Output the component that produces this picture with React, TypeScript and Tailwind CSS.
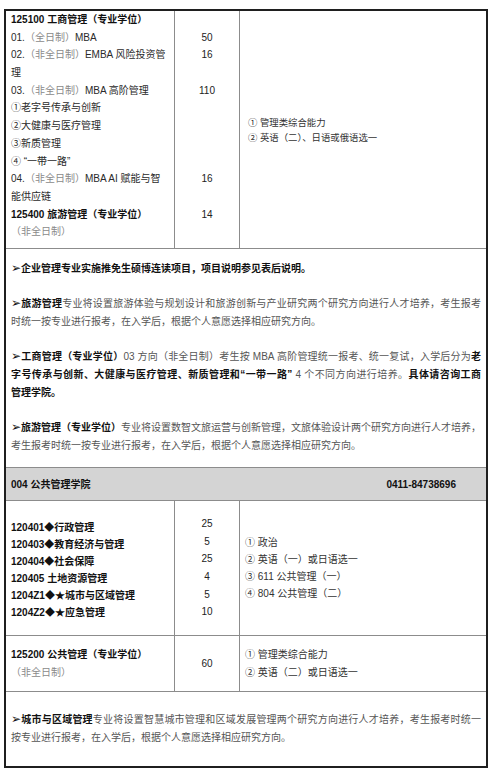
import React from "react";

const B = ({ children }: { children: React.ReactNode }) => (
  <span className="font-bold text-[#111]">{children}</span>
);
const G = ({ children }: { children: React.ReactNode }) => (
  <span className="text-[#8a8a8a]">{children}</span>
);
const Ar = () => (
  <span className="font-['DejaVu_Sans',sans-serif] font-bold text-[12px] leading-none text-[#111]">➢</span>
);

function JLine({ children, last }: { children: React.ReactNode; last?: boolean }) {
  return (
    <div
      className={
        last
          ? "whitespace-nowrap h-[18px]"
          : "text-justify [text-align-last:justify] whitespace-nowrap h-[18px]"
      }
    >
      {children}
    </div>
  );
}

export default function App() {
  const row1Left: React.ReactNode[] = [
    <B key="a">125100 工商管理（专业学位）</B>,
    <span key="b">01.<G>（全日制）</G>MBA</span>,
    <span key="c">02.<G>（非全日制）</G>EMBA 风险投资管</span>,
    <span key="d">理</span>,
    <span key="e">03.<G>（非全日制）</G>MBA 高阶管理</span>,
    <span key="f">①老字号传承与创新</span>,
    <span key="g">②大健康与医疗管理</span>,
    <span key="h">③新质管理</span>,
    <span key="i">④ “一带一路”</span>,
    <span key="j">04.<G>（非全日制）</G>MBA AI 赋能与智</span>,
    <span key="k">能供应链</span>,
    <B key="l">125400 旅游管理（专业学位）</B>,
    <G key="m">（非全日制）</G>,
  ];
  const row1Nums = ["", "50", "16", "", "110", "", "", "", "", "16", "", "14", ""];

  const row2 = [
    ["120401◆行政管理", "25"],
    ["120403◆教育经济与管理", "5"],
    ["120404◆社会保障", "25"],
    ["120405 土地资源管理", "4"],
    ["1204Z1◆★城市与区域管理", "5"],
    ["1204Z2◆★应急管理", "10"],
  ];

  return (
    <div className="w-[493px] h-[775px] bg-white pt-[9px] pl-[4px] font-['Liberation_Sans','Noto_Sans_CJK_SC',sans-serif] text-[#2a2a2a]">
      <div className="w-[484px] border-2 border-[#1f1f1f]">
        {/* Row 1 */}
        <div className="grid grid-cols-[169px_65px_1fr] h-[238px] border-b border-[#8c8c8c]">
          <div className="border-r border-[#8c8c8c] pl-[5px] text-[10px] leading-[17.7px]">
            {row1Left.map((l, i) => (
              <div key={i} className="whitespace-nowrap h-[17.7px]">
                {l}
              </div>
            ))}
          </div>
          <div className="border-r border-[#8c8c8c] text-[10px] leading-[17.7px] text-center text-[#222]">
            {row1Nums.map((n, i) => (
              <div key={i} className="h-[17.7px]">
                {n}
              </div>
            ))}
          </div>
          <div className="flex flex-col justify-center pl-[8px] text-[9.4px] leading-[15px] text-[#333]">
            <div>① 管理类综合能力</div>
            <div>② 英语（二）、日语或俄语选一</div>
          </div>
        </div>

        {/* Notes 1 */}
        <div className="pt-[11px] pb-[12px] px-[5px] text-[10px] leading-[18px] text-[#555] flex flex-col gap-[17px]">
          <div>
            <JLine last>
              <Ar />
              <B>企业管理专业实施推免生硕博连读项目，项目说明参见表后说明。</B>
            </JLine>
          </div>
          <div>
            <JLine>
              <Ar />
              <B>旅游管理</B>专业将设置旅游体验与规划设计和旅游创新与产业研究两个研究方向进行人才培养，考生报考
            </JLine>
            <JLine last>时统一按专业进行报考，在入学后，根据个人意愿选择相应研究方向。</JLine>
          </div>
          <div>
            <JLine>
              <Ar />
              <B>工商管理（专业学位）</B>03 方向（非全日制）考生按 MBA 高阶管理统一报考、统一复试，入学后分为<B>老</B>
            </JLine>
            <JLine>
              <B>字号传承与创新、大健康与医疗管理、新质管理和“一带一路”</B> 4 个不同方向进行培养。<B>具体请咨询工商</B>
            </JLine>
            <JLine last>
              <B>管理学院。</B>
            </JLine>
          </div>
          <div>
            <JLine>
              <Ar />
              <B>旅游管理（专业学位）</B>专业将设置数智文旅运营与创新管理，文旅体验设计两个研究方向进行人才培养，
            </JLine>
            <JLine last>考生报考时统一按专业进行报考，在入学后，根据个人意愿选择相应研究方向。</JLine>
          </div>
        </div>

        {/* Gray header */}
        <div className="h-[34px] bg-[#d4d4d4] border-y border-[#8c8c8c] flex items-center justify-between pl-[5px] pr-[30px] text-[10px] font-bold text-[#111]">
          <span>004 公共管理学院</span>
          <span>0411-84738696</span>
        </div>

        {/* Row 2 */}
        <div className="grid grid-cols-[169px_65px_1fr] h-[135px] border-b border-[#8c8c8c]">
          <div className="border-r border-[#8c8c8c] pl-[5px] pt-[3px] flex flex-col justify-center text-[10px] leading-[17px] font-bold text-[#111]">
            {row2.map(([t], i) => (
              <div key={i} className="whitespace-nowrap">
                {t}
              </div>
            ))}
          </div>
          <div className="border-r border-[#8c8c8c] flex flex-col justify-center text-center text-[10px] leading-[17.6px] text-[#222]">
            {row2.map(([, n], i) => (
              <div key={i}>{n}</div>
            ))}
          </div>
          <div className="flex flex-col justify-center pl-[5px] text-[10px] leading-[17px] text-[#333]">
            <div>① 政治</div>
            <div>② 英语（一）或日语选一</div>
            <div>③ 611 公共管理（一）</div>
            <div>④ 804 公共管理（二）</div>
          </div>
        </div>

        {/* Row 3 */}
        <div className="grid grid-cols-[169px_65px_1fr] h-[56px] border-b border-[#8c8c8c]">
          <div className="border-r border-[#8c8c8c] pl-[5px] flex flex-col justify-center text-[10px] leading-[18px]">
            <B>125200 公共管理（专业学位）</B>
            <G>（非全日制）</G>
          </div>
          <div className="border-r border-[#8c8c8c] flex items-center justify-center text-[10px] text-[#222]">
            60
          </div>
          <div className="flex flex-col justify-center pl-[5px] text-[10px] leading-[18px] text-[#333]">
            <div>① 管理类综合能力</div>
            <div>② 英语（二）或日语选一</div>
          </div>
        </div>

        {/* Final notes */}
        <div className="py-[19px] px-[5px] text-[10px] leading-[18px] text-[#555]">
          <JLine>
            <Ar />
            <B>城市与区域管理</B>专业将设置智慧城市管理和区域发展管理两个研究方向进行人才培养，考生报考时统一
          </JLine>
          <JLine last>按专业进行报考，在入学后，根据个人意愿选择相应研究方向。</JLine>
        </div>
      </div>
    </div>
  );
}
